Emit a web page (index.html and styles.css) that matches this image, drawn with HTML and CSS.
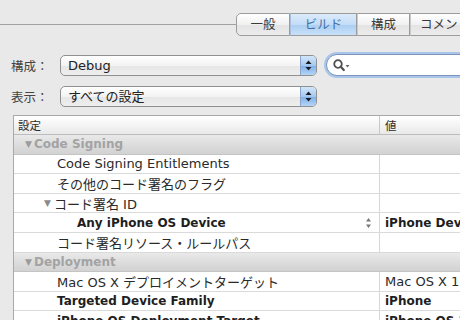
FILE: index.html
```html
<!DOCTYPE html>
<html>
<head>
  <title>ビルド設定</title>
  <link rel="stylesheet" href="styles.css">
</head>
<body>

  <div class="tabbar">
    <div class="tabline"></div>
    <div class="tabs">
      <div class="tab first">一般</div>
      <div class="tab active">ビルド</div>
      <div class="tab">構成</div>
      <div class="tab last">コメント</div>
    </div>
  </div>

  <div class="settings">
    <div class="field-row">
      <span class="field-label">構成：</span>
      <div class="popup">
        <span class="popup-value">Debug</span>
        <span class="popup-arrows">
          <svg width="7" height="11" viewBox="0 0 7 11"><path d="M3.5 0.5 L6.5 4 L0.5 4 Z M0.5 7 L6.5 7 L3.5 10.5 Z" fill="#1d1d1d"/></svg>
        </span>
      </div>
      <div class="search">
        <svg width="18" height="13" viewBox="0 0 18 13"><circle cx="5" cy="5" r="3.8" fill="none" stroke="#505050" stroke-width="1.8"/><path d="M7.8 7.8 L10.8 11" stroke="#505050" stroke-width="2.2" stroke-linecap="round"/><path d="M12.5 6 L16.5 6 L14.5 8.6 Z" fill="#666"/></svg>
      </div>
    </div>
    <div class="field-row second">
      <span class="field-label">表示：</span>
      <div class="popup">
        <span class="popup-value">すべての設定</span>
        <span class="popup-arrows">
          <svg width="7" height="11" viewBox="0 0 7 11"><path d="M3.5 0.5 L6.5 4 L0.5 4 Z M0.5 7 L6.5 7 L3.5 10.5 Z" fill="#1d1d1d"/></svg>
        </span>
      </div>
    </div>
  </div>

  <div class="table">
    <div class="row header">
      <div class="cell pad-head">設定</div>
      <div class="cell value">値</div>
    </div>

    <div class="row group">
      <div class="cell pad-group"><span class="disclosure">▼</span>Code Signing</div>
    </div>
    <div class="row">
      <div class="cell pad-1">Code Signing Entitlements</div>
      <div class="cell value"></div>
    </div>
    <div class="row">
      <div class="cell pad-1">その他のコード署名のフラグ</div>
      <div class="cell value"></div>
    </div>
    <div class="row">
      <div class="cell pad-sub"><span class="disclosure dark">▼</span>コード署名 ID</div>
      <div class="cell value"></div>
    </div>
    <div class="row">
      <div class="cell pad-2 bold stepper-cell">
        <span>Any iPhone OS Device</span>
        <svg class="stepper" width="7" height="12" viewBox="0 0 7 12"><path d="M3.5 1 L6 4.5 L1 4.5 Z M1 7.5 L6 7.5 L3.5 11 Z" fill="#777"/></svg>
      </div>
      <div class="cell value bold">iPhone Device</div>
    </div>
    <div class="row">
      <div class="cell pad-1">コード署名リソース・ルールパス</div>
      <div class="cell value"></div>
    </div>

    <div class="row group">
      <div class="cell pad-group"><span class="disclosure">▼</span>Deployment</div>
    </div>
    <div class="row">
      <div class="cell pad-1">Mac OS X デプロイメントターゲット</div>
      <div class="cell value">Mac OS X 10.5</div>
    </div>
    <div class="row">
      <div class="cell pad-1 bold">Targeted Device Family</div>
      <div class="cell value bold">iPhone</div>
    </div>
    <div class="row">
      <div class="cell pad-1 bold">iPhone OS Deployment Target</div>
      <div class="cell value bold">iPhone OS 3.0</div>
    </div>
  </div>

</body>
</html>
```

FILE: styles.css
```css
body {
  margin: 0;
  width: 460px;
  height: 320px;
  overflow: hidden;
  background-color: #e9e9e9;
  color: #2a2a2a;
  font-family: "DejaVu Sans", "Noto Sans CJK JP", sans-serif;
  font-size: 13px;
}

/* tab strip */

.tabbar {
  display: flex;
  align-items: center;
  padding-top: 13px;
}

.tabline {
  flex: 0 0 236px;
  height: 1px;
  background-color: #a2a2a2;
}

.tabs {
  display: flex;
  flex: none;
}

.tab {
  box-sizing: border-box;
  height: 23px;
  line-height: 21px;
  text-align: center;
  font-size: 12.5px;
  color: #3a3a3a;
  border: 1px solid #9c9c9c;
  border-left: 1px solid #c9c9c9;
  background: linear-gradient(#ffffff, #f1f1f1 50%, #e3e3e3 51%, #ececec);
  width: 53px;
}

.tab.first {
  width: 54px;
  border-left: 1px solid #9c9c9c;
  border-radius: 5px 0 0 5px;
}

.tab.active {
  width: 67px;
  color: #466fa6;
  background: linear-gradient(#dcebfb, #c3dcf6 50%, #aacdf2 51%, #c8e1f8);
  border-left-color: #a8bedb;
}

.tab.last {
  width: 80px;
  text-align: left;
  padding-left: 9px;
}

/* configuration popups */

.settings {
  padding: 18px 0 0 11px;
}

.field-row {
  display: flex;
  align-items: center;
  height: 22px;
}

.field-row.second {
  margin-top: 9px;
}

.field-label {
  flex: none;
  width: 49px;
  color: #444;
  font-size: 12.5px;
}

.popup {
  flex: none;
  box-sizing: border-box;
  display: flex;
  width: 257px;
  height: 21px;
  border: 1px solid #909090;
  border-radius: 5px;
  background: linear-gradient(#ffffff, #f3f3f3 50%, #e6e6e6 51%, #eeeeee);
  overflow: hidden;
}

.popup-value {
  flex: 1;
  padding-left: 7px;
  line-height: 19px;
  color: #222;
}

.popup-arrows {
  display: flex;
  align-items: center;
  justify-content: center;
  width: 15px;
  border-left: 1px solid #8aa5cc;
  background: linear-gradient(#d3e6fa, #a5c8f0 50%, #7eaee8 51%, #b4d5f7);
}

.search {
  flex: none;
  box-sizing: border-box;
  display: flex;
  align-items: center;
  margin-left: 9px;
  width: 160px;
  height: 22px;
  padding-left: 6px;
  background-color: #fff;
  border: 1px solid #7d95b8;
  border-radius: 11px;
  box-shadow: 0 0 0 2px #a9c5ea;
}

/* settings table */

.table {
  margin: 8px 0 0 13px;
  width: 520px;
  border-top: 1px solid #a9a9a9;
  border-left: 1px solid #a9a9a9;
  background-color: #fff;
}

.row {
  box-sizing: border-box;
  display: grid;
  grid-template-columns: 365px 1fr;
  height: 19.6px;
  border-bottom: 1px solid #dadada;
}

.cell {
  display: flex;
  align-items: center;
  white-space: nowrap;
  overflow: hidden;
}

.cell.value {
  border-left: 1px solid #d6d6d6;
  padding-left: 5px;
}

.row.header {
  height: 19px;
  background: linear-gradient(#ffffff, #f4f4f4 50%, #e9e9e9);
  border-bottom: 1px solid #bdbdbd;
  font-size: 11.5px;
  color: #2a2a2a;
}

.row.header .value {
  border-left-color: #c8c8c8;
}

.row.group {
  display: flex;
  background: linear-gradient(#e9e9e9, #dddddd 50%, #d2d2d2);
  border-bottom: 1px solid #c4c4c4;
  color: #a3a3a3;
  font-weight: bold;
  font-size: 12px;
}

.bold {
  font-weight: bold;
  font-size: 12px;
  color: #1e1e1e;
}

.disclosure {
  font-size: 9px;
  margin-right: 2px;
  color: #9b9b9b;
}

.disclosure.dark {
  color: #8a8a8a;
  margin-right: 3px;
}

.pad-head { padding-left: 4px; }
.pad-group { padding-left: 11px; }
.pad-sub { padding-left: 30px; }
.pad-1 { padding-left: 43px; }
.pad-2 { padding-left: 63px; }

.stepper-cell {
  justify-content: space-between;
  padding-right: 7px;
}
```
